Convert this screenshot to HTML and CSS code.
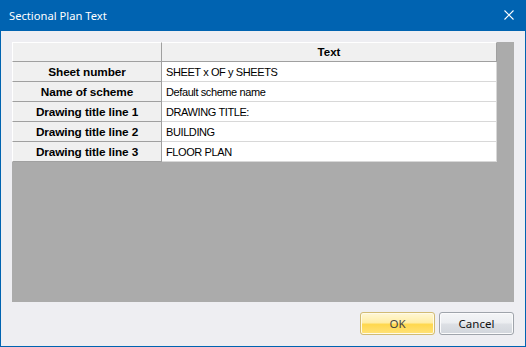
FILE: index.html
```html
<!DOCTYPE html>
<html lang="en">
<head>
  <meta charset="UTF-8" />
  <title>Sectional Plan Text</title>
  <link rel="stylesheet" href="styles.css">
</head>
<body>

  <div class="window">
    <div class="titlebar">
      <span class="title">Sectional Plan Text</span>
      <svg class="close" width="10" height="10" viewBox="0 0 10 10">
        <path d="M0.5 0.5 L9.5 9.5 M9.5 0.5 L0.5 9.5" stroke="#fff" stroke-width="1.1" fill="none" />
      </svg>
    </div>

    <div class="client">
      <div class="grid">
        <div class="cell corner"></div>
        <div class="cell colhead">Text</div>

        <div class="cell rowhead">Sheet number</div>
        <div class="cell value">SHEET x OF y SHEETS</div>

        <div class="cell rowhead">Name of scheme</div>
        <div class="cell value">Default scheme name</div>

        <div class="cell rowhead">Drawing title line 1</div>
        <div class="cell value">DRAWING TITLE:</div>

        <div class="cell rowhead">Drawing title line 2</div>
        <div class="cell value">BUILDING</div>

        <div class="cell rowhead">Drawing title line 3</div>
        <div class="cell value">FLOOR PLAN</div>
      </div>

      <div class="buttons">
        <button class="btn ok">OK</button>
        <button class="btn">Cancel</button>
      </div>
    </div>
  </div>

</body>
</html>
```

FILE: styles.css
```css
* {
  box-sizing: border-box;
}
body {
  margin: 0;
  background: #fff;
}
.window {
  width: 526px;
  height: 347px;
  display: flex;
  flex-direction: column;
  background: #eeeef2;
  border: 1px solid #0063b1;
  border-top: none;
}
.titlebar {
  height: 31px;
  flex: none;
  background: #0063b1;
  margin: 0 -1px;
  display: flex;
  align-items: center;
  justify-content: space-between;
  padding: 0 12px 1px 9px;
}
.title {
  color: #fff;
  font-family: "Noto Sans", sans-serif;
  font-size: 11.2px;
}
.close {
  display: block;
}
.client {
  flex: 1;
  display: flex;
  flex-direction: column;
  padding: 11px;
}
.grid {
  height: 260px;
  background: #ababab;
  display: grid;
  grid-template-columns: 150px 335px;
  grid-auto-rows: 20px;
  align-content: start;
  font-family: "Liberation Sans", Arial, sans-serif;
  font-size: 11px;
  color: #000;
}
.cell {
  border-right: 1px solid #a0a0a0;
  border-bottom: 1px solid #a0a0a0;
  display: flex;
  align-items: center;
  white-space: nowrap;
  overflow: hidden;
}
.corner,
.colhead {
  background: #f0f0f0;
  border-top: 1px solid #fff;
}
.corner {
  border-left: 1px solid #fff;
}
.colhead {
  justify-content: center;
  font-weight: bold;
  font-size: 11.5px;
}
.rowhead {
  background: #f0f0f0;
  border-left: 1px solid #fff;
  justify-content: center;
  font-weight: bold;
  font-size: 11.8px;
  letter-spacing: -0.1px;
}
.value {
  background: #fff;
  border-color: #d8d8d8;
  padding-left: 4px;
  padding-top: 1px;
  letter-spacing: -0.4px;
}
.buttons {
  margin-top: 10px;
  display: flex;
  justify-content: flex-end;
  gap: 4px;
}
.btn {
  width: 75px;
  height: 23px;
  padding: 0;
  font-family: "Noto Sans", sans-serif;
  font-size: 11.5px;
  color: #111;
  border: 1px solid #9fa4ab;
  border-radius: 3px;
  background: linear-gradient(#f4f5f7 0%, #eceef1 45%, #dcdfe4 55%, #d2d6dc 100%);
  box-shadow: inset 0 0 0 1px #fbfbfc;
}
.btn.ok {
  color: #444;
  border-color: #d1bb74;
  background: linear-gradient(#fff7d6 0%, #ffeea8 45%, #ffd84e 55%, #ffe27a 100%);
  box-shadow: inset 0 0 0 1px #fffbe8;
}
```
